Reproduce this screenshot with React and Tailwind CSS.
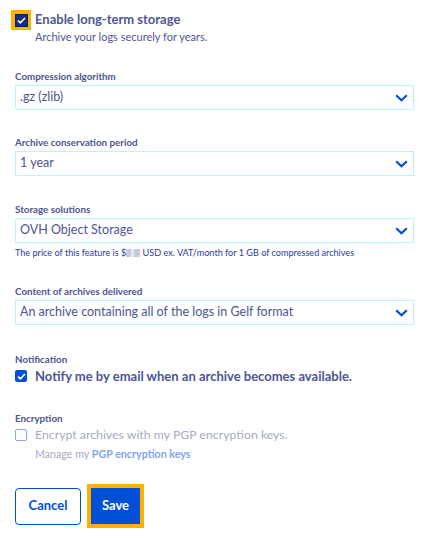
import React from "react";

const Chevron = () => (
  <svg width="13" height="8" viewBox="0 0 13 8" fill="none">
    <path d="M1.2 1.2L6.5 6.3L11.8 1.2" stroke="#0050d7" strokeWidth="2.2" />
  </svg>
);

const SelectBox = ({ value }) => (
  <div className="flex items-center justify-between h-[25px] border border-[#bef1ff] bg-white pl-[4px] pr-[5px]">
    <span className="text-[12.5px] text-[#4d5592]">{value}</span>
    <Chevron />
  </div>
);

const Field = ({ label, value, className }) => (
  <div className={className}>
    <div className="text-[9.8px] font-bold text-[#4d5592] leading-[14px] mb-[2px]">{label}</div>
    <SelectBox value={value} />
  </div>
);

const Check = () => (
  <svg width="9" height="7" viewBox="0 0 9 7" fill="none">
    <path d="M1 3.5L3.3 5.8L8 1" stroke="white" strokeWidth="1.6" />
  </svg>
);

const App = () => {
  return (
    <div className="w-[437px] h-[538px] bg-white font-['Lato',sans-serif] text-[#4d5592]">
      <div className="pl-[15px] pr-[23px] pt-[10px]">
        <div className="flex items-start ml-[-4px]">
          <div className="w-[20px] h-[20px] bg-[#ffb000] flex items-center justify-center shrink-0">
            <div className="w-[13px] h-[13px] bg-[#1b2a8a] border border-[#0f1a60] flex items-center justify-center">
              <Check />
            </div>
          </div>
          <div className="ml-[4px]">
            <div className="text-[13px] font-bold leading-[18px]">Enable long-term storage</div>
            <div className="text-[11px] leading-[16px] mt-[1px]">Archive your logs securely for years.</div>
          </div>
        </div>

        <Field className="mt-[24px]" label="Compression algorithm" value=".gz (zlib)" />
        <Field className="mt-[25px]" label="Archive conservation period" value="1 year" />
        <Field className="mt-[26px]" label="Storage solutions" value="OVH Object Storage" />
        <div className="flex items-center h-[12px] text-[9.1px] leading-[12px] mt-[4px] text-[#2b3aa0] whitespace-pre">
          <span>The price of this feature is $</span>
          <span className="inline-block w-[5px] h-[8px] bg-[#c8cbe0]"></span>
          <span className="inline-block w-[3px] h-[8px] bg-[#e4e6f0]"></span>
          <span className="inline-block w-[6px] h-[8px] bg-[#c8cbe0]"></span>
          <span> USD ex. VAT/month for 1 GB of compressed archives</span>
        </div>
        <Field className="mt-[25px]" label="Content of archives delivered" value="An archive containing all of the logs in Gelf format" />

        <div className="mt-[27px]">
          <div className="text-[9.8px] font-bold leading-[14px]">Notification</div>
          <div className="flex items-center h-[16px] mt-[2px]">
            <div className="w-[12px] h-[12px] rounded-[2px] bg-[#0050d7] flex items-center justify-center">
              <Check />
            </div>
            <span className="ml-[8px] text-[13px] leading-[16px] font-bold">Notify me by email when an archive becomes available.</span>
          </div>
        </div>

        <div className="mt-[27px]">
          <div className="text-[9.8px] font-bold leading-[14px]">Encryption</div>
          <div className="flex items-center h-[16px] mt-[2px]">
            <div className="w-[12px] h-[12px] rounded-[2px] border border-[#8aa8ea] bg-white"></div>
            <span className="ml-[8px] text-[12.3px] leading-[16px] text-[#a6a9c8]">Encrypt archives with my PGP encryption keys.</span>
          </div>
          <div className="ml-[20px] mt-[4px] h-[14px] text-[10.7px] leading-[14px] text-[#a6a9c8]">
            Manage my <span className="font-bold text-[#7fa4ec]">PGP encryption keys</span>
          </div>
        </div>

        <div className="flex items-center mt-[23px] gap-[6px]">
          <button className="w-[66px] h-[37px] rounded-[4px] border border-[#0050d7] bg-white text-[#0050d7] text-[13px] font-bold">
            Cancel
          </button>
          <div className="p-[4px] bg-[#ffb000]">
            <button className="block w-[49px] h-[36px] bg-[#0050d7] text-white text-[13px] font-bold">Save</button>
          </div>
        </div>
      </div>
    </div>
  );
};

export default App;
